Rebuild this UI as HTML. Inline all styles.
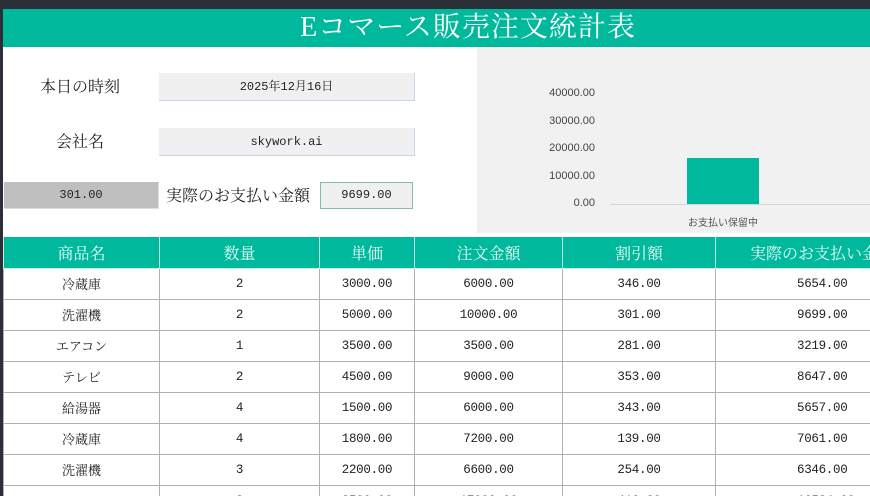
<!DOCTYPE html>
<html><head><meta charset="utf-8"><style>
*{margin:0;padding:0;box-sizing:border-box}
body{width:870px;height:496px;overflow:hidden;background:#2b2f38;position:relative;font-family:"Liberation Serif","Noto Serif CJK SC",serif;color:#222}
.page{position:absolute;left:3px;top:9px;width:867px;height:487px;background:#fff;overflow:hidden}
.title{position:absolute;left:0;top:0;width:867px;height:38px;background:#00b89c;color:#fff;font-size:28px;line-height:38px;text-align:center;padding-left:channel;padding-left:63px;letter-spacing:1px}
.lbl{position:absolute;font-size:16px;line-height:20px}
.box{position:absolute;background:#f0f0f0;border-bottom:1px solid #c5d9ea;border-right:1px solid #c5d9ea;font-family:"Liberation Mono","Noto Serif CJK SC",monospace;font-size:12px;text-align:center}
.chart{position:absolute;left:474px;top:38px;width:393px;height:186px;background:#f1f1f1}
.yl{position:absolute;right:275px;font-family:"Liberation Sans",sans-serif;font-size:11px;color:#444}
table{position:absolute;left:0;top:228px;border-collapse:collapse;table-layout:fixed;width:1000px}
td,th{height:31px;text-align:center;font-size:13px;border:1px solid #b0b0b0;font-weight:normal}
th{background:#00b89c;color:#eafffa;font-size:16px;border-color:#bff0e6;border-top:none}
td.n{font-family:"Liberation Mono",monospace;font-size:12.5px;letter-spacing:-0.3px}
</style></head><body>
<div class="page">
<div class="title">Eコマース販売注文統計表</div>
<div class="lbl" style="left:37px;top:69px">本日の時刻</div>
<div class="box" style="left:156px;top:64px;width:256px;height:28px;line-height:28px">2025年12月16日</div>
<div class="lbl" style="left:53px;top:124px">会社名</div>
<div class="box" style="left:156px;top:119px;width:256px;height:28px;line-height:28px">skywork.ai</div>
<div class="box" style="left:1px;top:173px;width:155px;height:27px;line-height:27px;background:#bfbfbf;border:none;border-right:1px solid #ddd;border-bottom:1px solid #ddd">301.00</div>
<div class="lbl" style="left:163px;top:178px">実際のお支払い金額</div>
<div class="box" style="left:317px;top:173px;width:93px;height:27px;line-height:25px;border:1px solid #7fbfa5">9699.00</div>
<div class="chart">
<div class="yl" style="top:40px">40000.00</div>
<div class="yl" style="top:68px">30000.00</div>
<div class="yl" style="top:95px">20000.00</div>
<div class="yl" style="top:123px">10000.00</div>
<div class="yl" style="top:150px">0.00</div>
<div style="position:absolute;left:133px;top:157px;width:260px;height:1px;background:#d6d6d6"></div>
<div style="position:absolute;left:210px;top:111px;width:72px;height:46px;background:#00b89c"></div>
<div style="position:absolute;left:210px;top:167px;width:72px;text-align:center;font-family:'Liberation Sans','Noto Sans CJK JP',sans-serif;font-size:10px;color:#555">お支払い保留中</div>
</div>
<table>
<colgroup><col style="width:156px"><col style="width:160px"><col style="width:95px"><col style="width:148px"><col style="width:153px"><col style="width:288px"></colgroup>
<tr><th>商品名</th><th>数量</th><th>単価</th><th>注文金額</th><th>割引額</th><th style="text-align:left;padding-left:34px">実際のお支払い金額</th></tr>
<tr><td>冷蔵庫</td><td class="n">2</td><td class="n">3000.00</td><td class="n">6000.00</td><td class="n">346.00</td><td class="n" style="text-align:left;padding-left:81px">5654.00</td></tr>
<tr><td>洗濯機</td><td class="n">2</td><td class="n">5000.00</td><td class="n">10000.00</td><td class="n">301.00</td><td class="n" style="text-align:left;padding-left:81px">9699.00</td></tr>
<tr><td>エアコン</td><td class="n">1</td><td class="n">3500.00</td><td class="n">3500.00</td><td class="n">281.00</td><td class="n" style="text-align:left;padding-left:81px">3219.00</td></tr>
<tr><td>テレビ</td><td class="n">2</td><td class="n">4500.00</td><td class="n">9000.00</td><td class="n">353.00</td><td class="n" style="text-align:left;padding-left:81px">8647.00</td></tr>
<tr><td>給湯器</td><td class="n">4</td><td class="n">1500.00</td><td class="n">6000.00</td><td class="n">343.00</td><td class="n" style="text-align:left;padding-left:81px">5657.00</td></tr>
<tr><td>冷蔵庫</td><td class="n">4</td><td class="n">1800.00</td><td class="n">7200.00</td><td class="n">139.00</td><td class="n" style="text-align:left;padding-left:81px">7061.00</td></tr>
<tr><td>洗濯機</td><td class="n">3</td><td class="n">2200.00</td><td class="n">6600.00</td><td class="n">254.00</td><td class="n" style="text-align:left;padding-left:81px">6346.00</td></tr>
<tr><td>エアコン</td><td class="n">2</td><td class="n">8500.00</td><td class="n">17000.00</td><td class="n">416.00</td><td class="n" style="text-align:left;padding-left:81px">16584.00</td></tr>
</table>
</div>
</body></html>
